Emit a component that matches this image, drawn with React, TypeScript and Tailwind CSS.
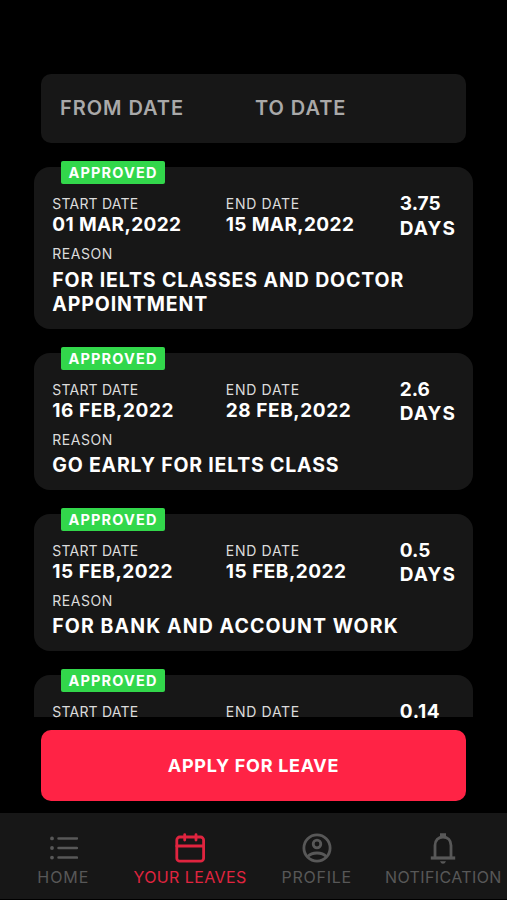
import React from 'react';
import clsx from 'clsx';

interface Leave {
  start: string;
  end: string;
  days: string;
  reason: string;
  dateClass: string;
  reasonClass: string;
}

const leaves: Leave[] = [
  {
    start: '01 MAR,2022',
    end: '15 MAR,2022',
    days: '3.75',
    reason: 'FOR IELTS CLASSES AND DOCTOR APPOINTMENT',
    dateClass: 'tracking-[0.38px]',
    reasonClass: 'tracking-[0.88px]',
  },
  {
    start: '16 FEB,2022',
    end: '28 FEB,2022',
    days: '2.6',
    reason: 'GO EARLY FOR IELTS CLASS',
    dateClass: 'tracking-[0.58px]',
    reasonClass: 'tracking-[0.8px]',
  },
  {
    start: '15 FEB,2022',
    end: '15 FEB,2022',
    days: '0.5',
    reason: 'FOR BANK AND ACCOUNT WORK',
    dateClass: 'tracking-[0.5px]',
    reasonClass: 'tracking-[1.1px]',
  },
];

const ListIcon = () => (
  <svg width="30" height="26" viewBox="0 0 30 26" fill="none" stroke="currentColor" strokeWidth="2.5" strokeLinecap="round">
    <path d="M10.5 3.4H29M10.5 13H29M10.5 22.6H29" />
    <path d="M4 3.4h.01M4 13h.01M4 22.6h.01" strokeWidth="3.8" />
  </svg>
);

const CalendarIcon = () => (
  <svg width="30" height="30" viewBox="0 0 30 30" fill="none" stroke="currentColor" strokeWidth="2.8" strokeLinecap="round">
    <rect x="1.8" y="4" width="26.8" height="24.2" rx="3" />
    <path d="M1.8 13h26.8M9.7 1.6v5.4M21 1.6v5.4" />
  </svg>
);

const ProfileIcon = () => (
  <svg width="30" height="30" viewBox="0 0 30 30" fill="none" stroke="currentColor" strokeWidth="2.8">
    <circle cx="15" cy="15" r="13.1" />
    <circle cx="15" cy="11" r="3.8" />
    <path d="M5.8 23.4C8 21 11.4 20 15 20s7 1 9.2 3.4" />
  </svg>
);

const BellIcon = () => (
  <svg width="26" height="31" viewBox="0 0 26 31" fill="none" stroke="currentColor" strokeWidth="2.8">
    <path d="M.8 25h24.4" strokeWidth="3.2" />
    <path d="M5 25V12.5C5 7.2 8.4 4 13 4s8 3.2 8 8.5V25" />
    <path d="M10 .3h6V4h-6zM10 28.2h6c-.8 1.7-1.7 2.5-3 2.5s-2.200-.8-3-2.5z" fill="currentColor" stroke="none" />
  </svg>
);

const Label: React.FC<{ className?: string; children: string }> = ({ className, children }) => (
  <p className={clsx('text-[14px] text-[#dcdcdc]', className)}>{children}</p>
);

const CardShell: React.FC<{ className?: string; children: React.ReactNode }> = ({ className, children }) => (
  <div className={clsx('relative shrink-0 bg-[#171717] pl-[18.3px] pt-[29px] text-white', className)}>
    <span className="absolute left-[27px] top-[-6px] flex h-[23px] w-[104px] items-center justify-center rounded-[2px] bg-[#32d74b] text-[14.5px] font-bold tracking-[1.15px]">
      APPROVED
    </span>
    {children}
  </div>
);

const LeaveCard: React.FC<{ leave: Leave }> = ({ leave }) => (
  <CardShell className="rounded-[16px] pb-[12px]">
    <div className="flex h-[44px]">
      <div className="w-[173.5px]">
        <Label className="leading-[16px] tracking-[0.2px]">START DATE</Label>
        <p className={clsx('text-[19px] font-bold leading-[26px]', leave.dateClass)}>{leave.start}</p>
      </div>
      <div className="w-[174px]">
        <Label className="leading-[16px] tracking-[0.7px]">END DATE</Label>
        <p className={clsx('text-[19px] font-bold leading-[26px]', leave.dateClass)}>{leave.end}</p>
      </div>
      <div className="-mt-[4px] text-[19px] font-bold leading-[24.4px]">
        <p>{leave.days}</p>
        <p className="tracking-[1.1px]">DAYS</p>
      </div>
    </div>
    <Label className="mt-[5px] leading-[18px] tracking-[0.55px]">REASON</Label>
    <p className={clsx('mt-[4.5px] w-[380px] text-[19.5px] font-bold leading-[24.4px]', leave.reasonClass)}>
      {leave.reason}
    </p>
  </CardShell>
);

const tabs = [
  { label: 'HOME', icon: <ListIcon />, className: 'text-[#585858] tracking-[1px]' },
  { label: 'YOUR LEAVES', icon: <CalendarIcon />, className: 'text-[#e0243f] tracking-[0.4px]' },
  { label: 'PROFILE', icon: <ProfileIcon />, className: 'text-[#585858] tracking-[0.75px]' },
  { label: 'NOTIFICATION', icon: <BellIcon />, className: 'text-[#585858] tracking-[0.38px]' },
];

export default function App() {
  return (
    <div className="flex h-[900px] w-[507px] flex-col overflow-hidden bg-black pt-[74px] font-['Inter',sans-serif]">
      <div className="mx-[41px] flex h-[69px] shrink-0 items-center rounded-[10px] bg-[#171717] pb-[2px] pl-[19px] text-[20px] font-semibold tracking-[0.95px] text-[#a9a9a9]">
        <p className="w-[195px]">FROM DATE</p>
        <p>TO DATE</p>
      </div>

      <div className="mx-[34px] flex h-[575px] shrink-0 flex-col gap-[24.2px] pt-[24.4px]">
        {leaves.map((leave) => (
          <LeaveCard key={leave.days} leave={leave} />
        ))}
        <CardShell className="h-[42.4px] rounded-t-[16px]">
          <div className="flex">
            <Label className="w-[173.5px] leading-[16px] tracking-[0.2px]">START DATE</Label>
            <Label className="w-[174px] leading-[16px] tracking-[0.7px]">END DATE</Label>
            <p className="-mt-[4px] text-[19px] font-bold leading-[24.4px] tracking-[0.6px]">0.14</p>
          </div>
        </CardShell>
      </div>

      <button className="mx-[41px] mt-[12px] h-[71px] shrink-0 rounded-[10px] bg-[#ff2345] text-[18px] font-bold tracking-[0.7px] text-white">
        APPLY FOR LEAVE
      </button>

      <nav className="mt-[12px] flex h-[86px] shrink-0 bg-[#171717]">
        {tabs.map((tab) => (
          <div key={tab.label} className={clsx('flex w-[126.7px] shrink-0 flex-col items-center pt-[19px] text-[16px]', tab.className)}>
            <div className="flex h-[32px] items-center">{tab.icon}</div>
            <span className="mt-px">{tab.label}</span>
          </div>
        ))}
      </nav>
    </div>
  );
}
